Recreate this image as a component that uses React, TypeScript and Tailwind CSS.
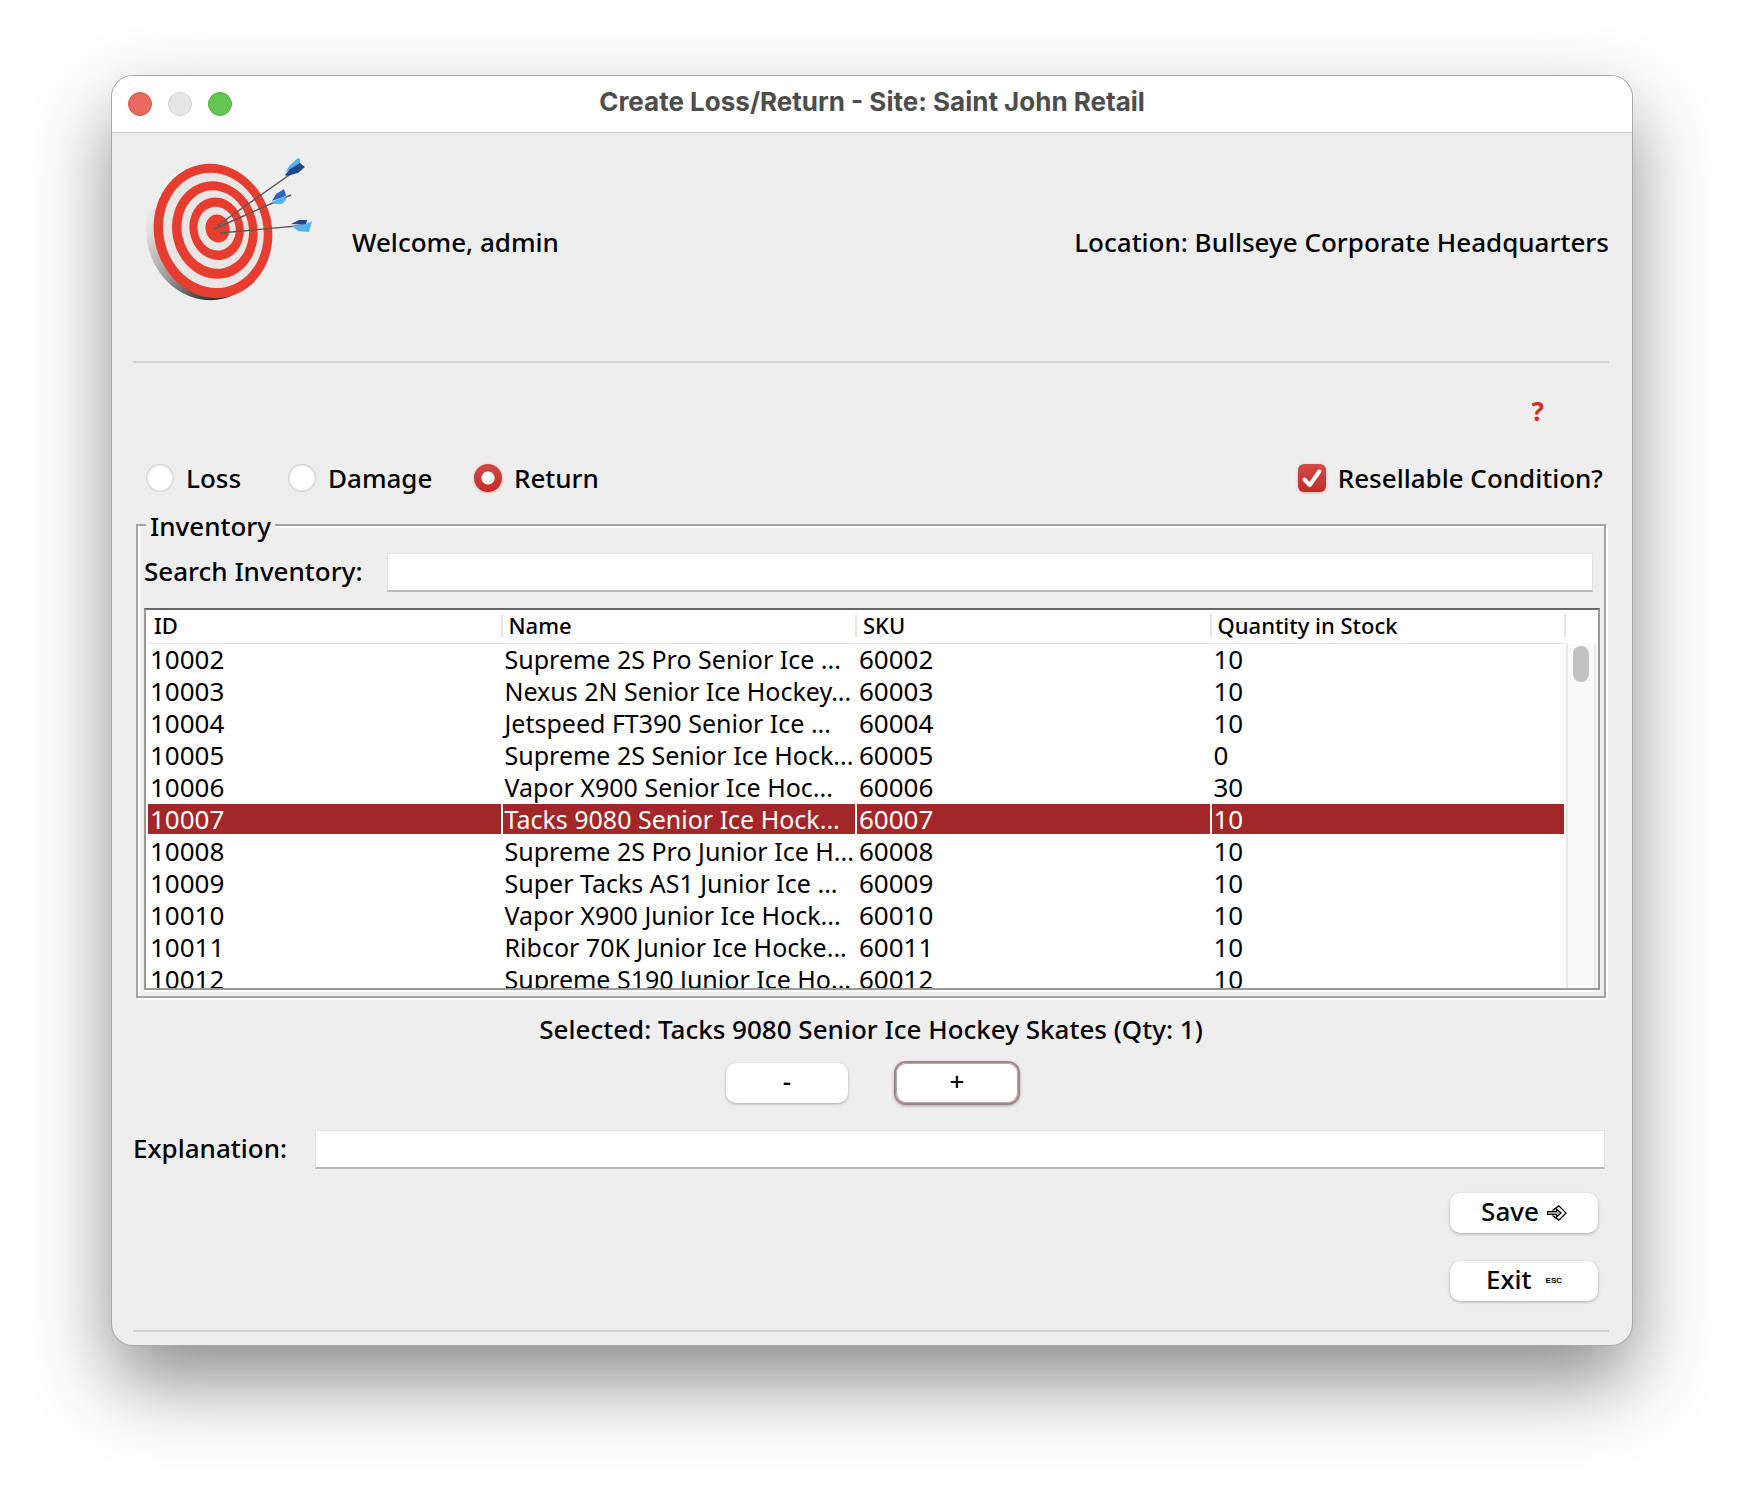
import { useState } from "react";

const rows = [
  ["10002", "Supreme 2S Pro Senior Ice ...", "60002", "10"],
  ["10003", "Nexus 2N Senior Ice Hockey...", "60003", "10"],
  ["10004", "Jetspeed FT390 Senior Ice ...", "60004", "10"],
  ["10005", "Supreme 2S Senior Ice Hock...", "60005", "0"],
  ["10006", "Vapor X900 Senior Ice Hoc...", "60006", "30"],
  ["10007", "Tacks 9080 Senior Ice Hock...", "60007", "10"],
  ["10008", "Supreme 2S Pro Junior Ice H...", "60008", "10"],
  ["10009", "Super Tacks AS1 Junior Ice ...", "60009", "10"],
  ["10010", "Vapor X900 Junior Ice Hock...", "60010", "10"],
  ["10011", "Ribcor 70K Junior Ice Hocke...", "60011", "10"],
  ["10012", "Supreme S190 Junior Ice Ho...", "60012", "10"],
];

function BullseyeLogo() {
  return (
    <svg viewBox="0 0 180 170" className="ml-[7px] mt-3 mb-[46px] h-[170px] w-[180px] shrink-0" aria-label="Bullseye logo">
      <defs>
        <linearGradient id="rim" x1="0" y1="0" x2="0.35" y2="1">
          <stop offset="0" stopColor="#ffffff" />
          <stop offset="0.35" stopColor="#e2e1e0" />
          <stop offset="0.7" stopColor="#9b9a98" />
          <stop offset="1" stopColor="#333333" />
        </linearGradient>
      </defs>
      <ellipse cx="67.500" cy="88" rx="61" ry="67.500" transform="rotate(-14 67.500 88)" fill="url(#rim)" />
      <g transform="rotate(-12 73 86)">
        <ellipse cx="73" cy="86" rx="59" ry="67.500" fill="#e73c30" />
        <ellipse cx="73.500" cy="85.500" rx="50" ry="58" fill="#e9e5e4" />
        <ellipse cx="75" cy="85.500" rx="42.500" ry="49" fill="#e73c30" />
        <ellipse cx="75.500" cy="85" rx="33.500" ry="39.500" fill="#e9e5e4" />
        <ellipse cx="77" cy="84.500" rx="27" ry="31.500" fill="#e73c30" />
        <ellipse cx="77" cy="84.500" rx="19" ry="22" fill="#e9e5e4" />
        <ellipse cx="78" cy="84.500" rx="12" ry="14" fill="#e73c30" />
      </g>
      <g stroke="#5f5754" strokeWidth="1.4" fill="none">
        <path d="M77 81 L162 21" />
        <path d="M74 84 L151 50" />
        <path d="M80 88 L168 80" />
      </g>
      <path d="M146 27 L149 21 L158 13 L160 14 L160 20 Z" fill="#56b0f8" />
      <path d="M145 30 L150 24 L160 18 L165 22 L158 28 L147 31 Z" fill="#24488c" />
      <path d="M132 56 L136 49 L144 44 L146 51 Z" fill="#2f63c8" />
      <path d="M132 57 L146 51 L146 55 L142 59 L134 59 Z" fill="#56b0f8" />
      <path d="M151 79 L159 75 L167 75 L166 80 Z" fill="#24488c" />
      <path d="M152 81 L166 79 L172 76 L169 87 L158 86 Z" fill="#56b0f8" />
    </svg>
  );
}

const labelText = "text-[26px] leading-9 font-medium";
const field =
  "h-[39px] min-w-0 flex-1 border border-[#e2e2e2] border-b-2 border-b-[#b8b8b8] bg-white px-2 text-[26px] outline-none";
const radio =
  "size-7 shrink-0 appearance-none rounded-full bg-white shadow-[inset_0_0_2px_1px_#c4c4c4] checked:bg-[radial-gradient(circle,#fff_6px,transparent_7px),linear-gradient(#d34b49,#c32c27)] checked:shadow-[0_1px_3px_#dba9a8]";
const button =
  "flex h-10 items-center justify-center rounded-[10px] bg-white pb-1 text-[26px] leading-9 font-medium shadow-[0_1px_3px_#a8a8a8]";

export default function App() {
  const [kind, setKind] = useState("Return");
  const [selected, setSelected] = useState("10007");
  const [qty, setQty] = useState(1);

  return (
    <div className="bg-white px-28 pt-[76px] pb-[148px] font-['Noto_Sans',sans-serif] text-black">
      <main className="overflow-hidden rounded-[21px] bg-[#eeeeee] shadow-[0_0_0_1px_#a8a8a8,0_36px_80px_rgba(0,0,0,0.46)]">
        <header className="grid grid-cols-[1fr_auto_1fr] items-center border-b border-[#c8c8c8] bg-white px-4 pb-1 font-['Inter',sans-serif]">
          <div className="flex gap-4 pt-1">
            <button aria-label="Close" className="size-6 rounded-full border border-[#d4574c] bg-[#e9695e]" />
            <button aria-label="Minimize" className="size-6 rounded-full border border-[#cfcfcf] bg-[#e5e5e5]" />
            <button aria-label="Zoom" className="size-6 rounded-full border border-[#50ac40] bg-[#62c554]" />
          </div>
          <h1 className="py-2 text-[26px] leading-9 font-bold text-[#4d4d4d]">
            Create Loss/Return - Site: Saint John Retail
          </h1>
        </header>

        <div className="pb-[13px] pl-[21px] pr-[23px]">
          <section className="flex items-center border-b-2 border-[#d3d3d3]">
            <BullseyeLogo />
            <p className={`${labelText} ml-8 flex-1 pb-[10px]`}>Welcome, admin</p>
            <p className={`${labelText} pb-[10px]`}>Location: Bullseye Corporate Headquarters</p>
          </section>

          <div className="mt-[30px] mr-[65px] flex justify-end">
            <button aria-label="Help" className="text-[26px] leading-9 font-bold text-[#cc2c22]">?</button>
          </div>

          <div className="mt-[31px] mr-[6px] ml-[13px] flex items-center justify-between">
            <div className="flex">
              <label className={`${labelText} flex w-[142px] items-center gap-3`}>
                <input type="radio" name="kind" className={radio} checked={kind === "Loss"} onChange={() => setKind("Loss")} />
                Loss
              </label>
              <label className={`${labelText} flex w-[186px] items-center gap-3`}>
                <input type="radio" name="kind" className={radio} checked={kind === "Damage"} onChange={() => setKind("Damage")} />
                Damage
              </label>
              <label className={`${labelText} flex items-center gap-3`}>
                <input type="radio" name="kind" className={radio} checked={kind === "Return"} onChange={() => setKind("Return")} />
                Return
              </label>
            </div>
            <label className={`${labelText} relative flex items-center gap-3`}>
              <input
                type="checkbox"
                defaultChecked
                className="peer size-7 shrink-0 appearance-none rounded-[6px] bg-white shadow-[0_1px_3px_#b0b0b0] checked:bg-[linear-gradient(#d34b49,#c32c27)] checked:shadow-[0_1px_3px_#dba9a8]"
              />
              <svg viewBox="0 0 28 28" className="pointer-events-none absolute left-0 hidden size-7 peer-checked:block" fill="none" stroke="#fff" strokeWidth="4" strokeLinecap="round" strokeLinejoin="round">
                <path d="M6.500 15.500 L11.800 21 L21.300 7.500" />
              </svg>
              Resellable Condition?
            </label>
          </div>

          <fieldset className="relative mt-7 mr-[3px] ml-[3px] border-2 border-[#a5a5a5] pt-[27px] pb-[6px] shadow-[2px_2px_0_#fff,inset_2px_2px_0_#fff]">
            <legend className={`${labelText} absolute -top-[18px] left-2 bg-[#eeeeee] px-1`}>Inventory</legend>
            <div className="flex items-center pr-[11px] pl-[6px]">
              <label htmlFor="search" className={`${labelText} w-[243px] pb-[3px]`}>Search Inventory:</label>
              <input id="search" className={field} />
            </div>
            <div className="mr-[4px] mt-4 ml-[6px] flex overflow-hidden border-2 border-[#999999] border-t-[#666666] bg-white pl-[2px] shadow-[0_2px_0_#fff]">
              <div className="h-[378px] flex-1 overflow-hidden">
                <table className="w-full table-fixed border-separate border-spacing-0">
                  <thead>
                    <tr>
                      {["ID", "Name", "SKU", "Quantity in Stock"].map((h) => (
                        <th key={h} className="h-[34px] border-b border-[#e5e5e5] p-0 pb-[2px] text-left text-[22px] font-medium">
                          <div className="flex h-[22px] items-center border-r-2 border-[#e5e5e5] pl-[6px]">{h}</div>
                        </th>
                      ))}
                    </tr>
                  </thead>
                  <tbody>
                    {rows.map((r) => (
                      <tr
                        key={r[0]}
                        onClick={() => setSelected(r[0])}
                        className={r[0] === selected ? "bg-[#a32729] text-white" : ""}
                      >
                        {r.map((c, i) => (
                          <td
                            key={i}
                            className={`h-8 border-r-2 border-b-2 border-white p-0 pl-[2px] leading-[30px] whitespace-nowrap ${
                              i === 1 ? "text-[25px]" : "text-[26px]"
                            }`}
                          >
                            {c}
                          </td>
                        ))}
                      </tr>
                    ))}
                  </tbody>
                </table>
              </div>
              <div className="mr-[2px] flex w-[30px] flex-col pt-[34px]">
                <div className="flex flex-1 justify-center border-x-2 border-[#e8e8e8] bg-[#fafafa] pt-[2px]">
                  <div className="h-9 w-4 rounded-full bg-[#c1c1c1]" />
                </div>
              </div>
            </div>
          </fieldset>

          <p className={`${labelText} mt-[13px] text-center`}>
            Selected: Tacks 9080 Senior Ice Hockey Skates (Qty: {qty})
          </p>
          <div className="mt-4 ml-[2px] flex justify-center gap-12">
            <button className={`${button} w-[122px]`} onClick={() => setQty(Math.max(0, qty - 1))}>-</button>
            <button
              className="flex h-10 w-[122px] items-center justify-center rounded-[10px] bg-white pb-1 text-[26px] leading-9 font-medium shadow-[0_0_0_2px_#a0868b,0_1px_3px_2px_#a8a8a8,inset_0_0_0_1px_#b9a4a8]"
              onClick={() => setQty(qty + 1)}
            >
              +
            </button>
          </div>

          <div className="mt-[27px] mr-[4px] flex items-center">
            <label htmlFor="explanation" className={`${labelText} w-[182px] pb-[3px]`}>Explanation:</label>
            <input id="explanation" className={field} />
          </div>

          <div className="mt-6 mr-[11px] flex flex-col items-end gap-7">
            <button className={`${button} w-[148px] gap-2`}>
              Save
              <svg viewBox="0 0 20 16" className="mt-1 h-4 w-5" fill="none" stroke="#000" strokeWidth="1.3">
                <path d="M5.500 5.500 L11.800 0.900 L19 8 L11.800 15.100 L5.500 10.500" />
                <path d="M0.700 6.600 H9.500 V4.200 L14 8 L9.500 11.800 V9.400 H0.700 Z" fill="#fff" />
                <path d="M1 8 H12" stroke="#888" />
              </svg>
            </button>
            <button className={`${button} w-[148px] gap-[14px]`}>
              Exit
              <span className="pt-[3px] font-['Liberation_Sans',sans-serif] text-[8px] font-bold">ESC</span>
            </button>
          </div>
          <hr className="mt-[29px] border-t-2 border-[#d3d3d3]" />
        </div>
      </main>
    </div>
  );
}
